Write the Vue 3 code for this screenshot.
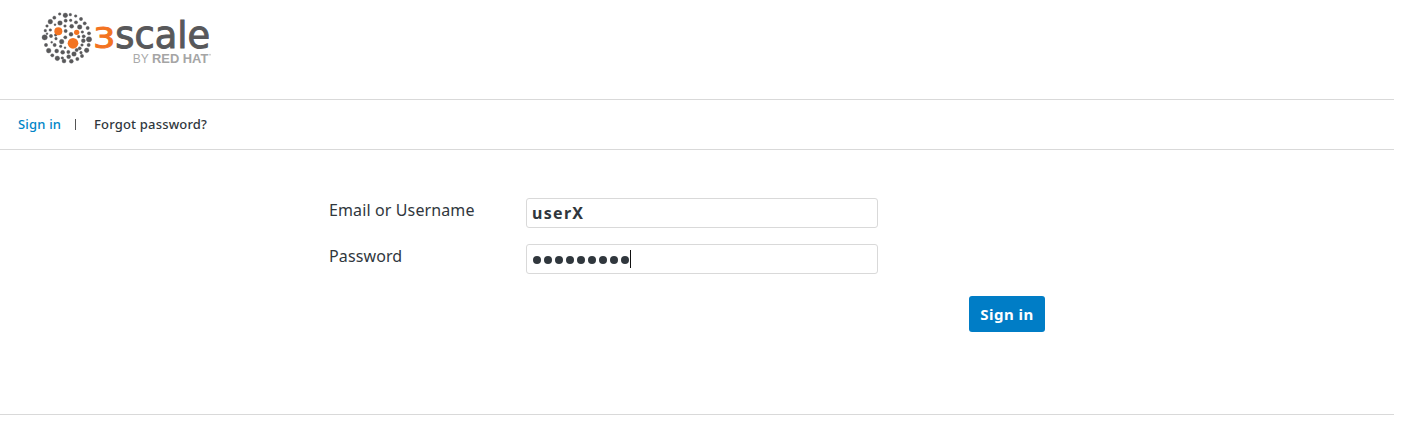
<script setup>
import { ref } from 'vue'

const username = ref('userX')
const maskLength = 9

// x, y, radius of each bead in the globe mark
const beads = [
  [71, 18, 4], [88, 22, 7], [103, 20, 4], [119, 24, 4], [55, 29, 5], [43, 41, 7], [72, 45, 7],
  [104, 37, 4], [89, 38, 5], [135, 33, 5], [107, 55, 6], [57, 50, 3], [87, 54, 4], [120, 43, 5],
  [131, 57, 7], [146, 46, 5], [155, 60, 5], [33, 54, 4], [43, 66, 4], [28, 68, 4], [26, 88, 8],
  [45, 84, 5], [33, 77, 3], [60, 92, 4], [59, 81, 4], [89, 69, 5], [105, 79, 6], [88, 88, 5],
  [77, 101, 7], [139, 72, 4], [128, 86, 4], [143, 85, 5], [159, 76, 5], [159, 94, 8],
  [142, 98, 6], [30, 111, 5], [47, 103, 3], [56, 111, 5], [38, 128, 7], [62, 129, 6],
  [80, 133, 6], [74, 115, 4], [87, 119, 3], [97, 132, 5], [114, 138, 7], [98, 146, 6],
  [122, 126, 5], [131, 121, 5], [138, 111, 4], [135, 134, 4], [152, 127, 7], [158, 111, 5],
  [138, 144, 5], [49, 142, 5], [64, 151, 7], [79, 150, 4], [84, 159, 6], [106, 160, 6],
  [124, 153, 5],
]
const accents = [[67, 70, 12], [122, 73, 8], [111, 106, 16]]
</script>

<template>
  <div class="page">
    <header class="header">
      <svg class="logo" viewBox="0 0 540 180" role="img" aria-label="3scale by Red Hat">
        <g class="bead">
          <circle v-for="(b, i) in beads" :key="i" :cx="b[0]" :cy="b[1]" :r="b[2]" />
        </g>
        <g class="accent">
          <circle v-for="(b, i) in accents" :key="i" :cx="b[0]" :cy="b[1]" :r="b[2]" />
        </g>
        <text class="three" x="172" y="120" textLength="66" lengthAdjust="spacingAndGlyphs">3</text>
        <text class="scale" x="238" y="120" textLength="284" lengthAdjust="spacingAndGlyphs">scale</text>
        <text class="by" x="290" y="164" textLength="48" lengthAdjust="spacingAndGlyphs">BY</text>
        <text class="redhat" x="348" y="164" textLength="169" lengthAdjust="spacingAndGlyphs">RED HAT</text>
        <circle class="mark" cx="522" cy="140" r="2.5" />
      </svg>
    </header>
    <nav class="nav">
      <a class="active">Sign in</a>
      <span class="divider"></span>
      <a>Forgot password?</a>
    </nav>
    <main class="main">
      <div class="row">
        <label>Email or Username</label>
        <div class="field"><span class="value">{{ username }}</span></div>
      </div>
      <div class="row">
        <label>Password</label>
        <div class="field">
          <span class="dots"><span v-for="n in maskLength" :key="n" class="dot"></span></span>
          <span class="caret"></span>
        </div>
      </div>
      <button class="submit" type="button">Sign in</button>
    </main>
  </div>
</template>

<style>
body { background: #fff; }
</style>

<style scoped>
.page {
  width: 1394px;
  height: 424px;
  color: #30373d;
  font-family: "Noto Sans", "Open Sans", sans-serif;
}
.header {
  box-sizing: border-box;
  height: 100px;
  padding: 8px 0 0 36px;
  border-bottom: 1px solid #d9d9d9;
}
.logo { display: block; width: 180px; height: 60px; }
.bead { fill: #58585a; stroke: #58585a; stroke-width: 1; }
.accent, .three { fill: #f37321; }
.three { font: 83px "DejaVu Sans", sans-serif; stroke: #f37321; stroke-width: 3; }
.scale { font: 110px "DejaVu Sans", sans-serif; fill: #58585a; stroke: #58585a; stroke-width: 3; }
.by { font: 36px "Liberation Sans", sans-serif; fill: #aaa; }
.redhat { font: bold 36px "Liberation Sans", sans-serif; fill: #a5a5a5; }
.mark { fill: #c5c5c5; }
.nav {
  box-sizing: border-box;
  display: flex;
  align-items: center;
  height: 50px;
  padding-left: 18px;
  border-bottom: 1px solid #d9d9d9;
  font-size: 13px;
  font-weight: 500;
  line-height: 18px;
  letter-spacing: 0.18px;
  white-space: nowrap;
}
.nav a { padding-bottom: 2px; }
.nav .active { width: 57px; color: #0085c7; }
.divider { width: 1px; height: 11px; margin-right: 18px; background: #555; }
.main {
  box-sizing: border-box;
  display: flex;
  flex-direction: column;
  height: 265px;
  padding: 48px 349px 0 329px;
  border-bottom: 1px solid #d9d9d9;
}
.row { display: flex; height: 30px; margin-bottom: 16px; }
label { width: 197px; font-size: 16px; line-height: 24px; letter-spacing: 0.12px; white-space: nowrap; }
.field {
  box-sizing: border-box;
  display: flex;
  align-items: center;
  width: 352px;
  height: 30px;
  padding-left: 5px;
  border: 1px solid #d9d9d9;
  border-radius: 3px;
}
.value { font-size: 16px; font-weight: 700; line-height: 28px; letter-spacing: 1.3px; }
.dots { display: flex; gap: 3px; margin: 2px 1px 0; }
.dot { width: 8px; height: 8px; border-radius: 50%; background: #30373d; }
.caret { width: 1px; height: 18px; background: #111; }
.submit {
  align-self: flex-end;
  width: 76px;
  height: 36px;
  margin-top: 6px;
  padding: 0;
  border: 0;
  border-radius: 3px;
  background: #007dc6;
  color: #fff;
  font: 700 15px/36px "Noto Sans", "Open Sans", sans-serif;
  letter-spacing: 0.45px;
}
</style>
